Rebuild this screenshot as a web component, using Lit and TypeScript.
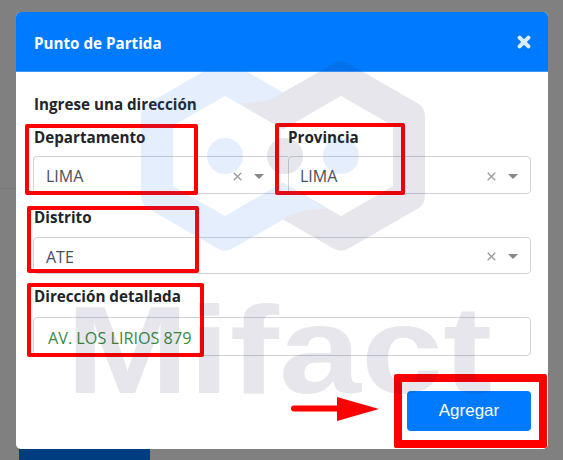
import { LitElement, html, css, svg } from "lit";
import { customElement } from "lit/decorators.js";

@customElement("app-root")
export class AppRoot extends LitElement {
  static styles = css`
    :host { display: block; position: relative; width: 563px; height: 460px; overflow: hidden; background: #808080; font-family: "Open Sans", "Noto Sans", sans-serif; }
    .page { padding: 12px 15px 0 16px; }
    .hair { position: absolute; left: 0; top: 188px; width: 16px; height: 1px; background: #767676; }
    .modal { width: 532px; height: 437px; box-sizing: border-box; background: #fff; border-radius: 5px; overflow: hidden; }
    .head { height: 60px; box-sizing: border-box; background: #007bff; border-bottom: 1px solid #3d9aff; display: flex; align-items: center; justify-content: space-between; padding: 2px 17px 0 18px; color: #fff; font-size: 15.2px; font-weight: 700; }
    .close { display: block; width: 14px; height: 14px; margin-top: -2px; }
    .body { padding: 22px 17px 0; }
    .lead, .lab { height: 20px; line-height: 20px; font-size: 15.2px; font-weight: 700; color: #212529; padding-left: 1px; white-space: nowrap; }
    .lab.top { margin-top: 13px; }
    .lab.flush { padding-left: 0; }
    .lab.last { margin-top: 12px; }
    .row { display: grid; grid-template-columns: 255px 243px; }
    .sel, .inp { box-sizing: border-box; display: flex; align-items: center; border: 1px solid #ced4da; font-size: 16px; color: #495057; background: #fff; border-radius: 4px; padding-top: 2px; }
    .sel { height: 38px; padding-left: 12px; padding-right: 12px; margin-top: 9px; }
    .sel.wide { height: 37px; margin-top: 10px; }
    .sel.near { padding-left: 11px; }
    .sel span.v { flex: 1; }
    .row .sel.joined { border-right: none; border-radius: 4px 0 0 4px; padding-right: 24px; }
    .x { display: block; width: 9px; height: 9px; margin-right: 12px; }
    .tri { display: block; width: 10px; height: 5px; }
    .inp { height: 39px; margin-top: 11px; padding-left: 14px; padding-right: 14px; color: #3b8a3f; font-size: 16.2px; }
    .foot { display: flex; justify-content: flex-end; margin-top: 35px; }
    button { width: 124px; height: 40px; border: none; border-radius: 4px; background: #007bff; color: #fff; font: 400 17px "Liberation Sans", Arial, sans-serif; padding: 0; }
    .mark { position: absolute; inset: 0; width: 563px; height: 460px; pointer-events: none; opacity: .11; }
    .mark text { font: 700 125px "Liberation Sans", Arial, sans-serif; fill: #262b58; }
    .box { position: absolute; box-sizing: border-box; border: 4px solid #f00; border-radius: 2px; pointer-events: none; }
    .b1 { left: 25px; top: 124px; width: 173px; height: 71px; }
    .b2 { left: 275px; top: 123px; width: 130px; height: 72px; }
    .b3 { left: 27px; top: 206px; width: 172px; height: 67px; }
    .b4 { left: 27px; top: 283px; width: 177px; height: 74px; }
    .b5 { left: 394px; top: 374px; width: 153px; height: 74px; border-width: 8px; }
    .arrow { position: absolute; left: 288px; top: 394px; width: 94px; height: 30px; pointer-events: none; }
    .bar { width: 131px; height: 11px; margin-left: 3px; background: #003d80; }
  `;

  private clear() {
    return html`<svg class="x" viewBox="0 0 9 9"><path d="M.7.7l7.6 7.6M8.3.7L.7 8.3" stroke="#999" stroke-width="1.3" fill="none"/></svg>`;
  }
  private tri() {
    return html`<svg class="tri" viewBox="0 0 10 5"><path d="M0 0h10L5 5z" fill="#888"/></svg>`;
  }
  private select(v: string, cls = "") {
    return html`<div class="sel ${cls}"><span class="v">${v}</span>${this.clear()}${this.tri()}</div>`;
  }

  render() {
    return html`
      <div class="hair"></div>
      <div class="page">
        <div class="modal">
          <div class="head">
            <span>Punto de Partida</span>
            <svg class="close" viewBox="0 0 14 14"><path d="M2.6 2.6l8.8 8.8M11.4 2.6l-8.8 8.8" stroke="#dcebff" stroke-width="4" stroke-linecap="round" fill="none"/></svg>
          </div>
          <div class="body">
            <div class="lead">Ingrese una dirección</div>
            <div class="row">
              <div><div class="lab top">Departamento</div>${this.select("LIMA", "joined")}</div>
              <div><div class="lab top flush">Provincia</div>${this.select("LIMA", "near")}</div>
            </div>
            <div class="lab top">Distrito</div>
            ${this.select("ATE", "wide")}
            <div class="lab last">Dirección detallada</div>
            <div class="inp">AV. LOS LIRIOS 879</div>
            <div class="foot"><button>Agregar</button></div>
          </div>
        </div>
        <div class="bar"></div>
      </div>
      <div class="box b1"></div><div class="box b2"></div><div class="box b3"></div><div class="box b4"></div><div class="box b5"></div>
      <svg class="arrow" viewBox="288 394 94 30">
        <path d="M294 408.5H340" stroke="#f00" stroke-width="6" stroke-linecap="round"/>
        <path d="M337 397L379 409L337 421z" fill="#f00"/>
      </svg>
      <svg class="mark" viewBox="0 0 563 460">
        ${svg`
        <g fill="none" stroke-width="32" stroke-linejoin="round">
          <path d="M283 111L225 77.5L157 116.75V195.25L225 234.5L283 201" stroke="#1671ee"/>
          <path d="M283 111L341 77.5L409 116.75V195.25L341 234.5L283 201" stroke="#262b58"/>
        </g>
        <path d="M240 103L283 129.5L300 119.7V82.7L283 92.5C272 101 255 103 240 103Z" fill="#262b58"/>
        <path d="M326 209L283 182.5L266 192.3V229.3L283 219.5C294 211 311 209 326 209Z" fill="#1671ee"/>
        <circle cx="225" cy="156" r="18" fill="#1671ee"/>
        <circle cx="285" cy="156" r="18" fill="#262b58"/>
        <circle cx="341" cy="156" r="18" fill="#1671ee"/>
        <text x="66" y="393" textLength="426" lengthAdjust="spacingAndGlyphs">Mifact</text>
        `}
      </svg>
    `;
  }
}
